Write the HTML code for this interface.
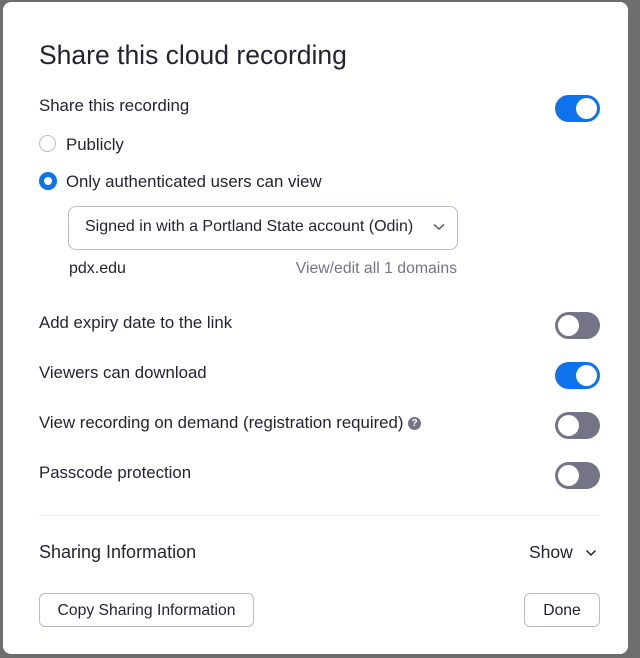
<!DOCTYPE html>
<html><head><style>
body{margin:0;width:640px;height:658px;background:#6e6e6e;font-family:"Liberation Sans",sans-serif;color:#232333;position:relative;overflow:hidden}
.m{position:absolute;left:3px;top:2px;width:625px;height:652px;background:#fff;border-radius:8px}
.a{position:absolute;white-space:nowrap}
.t{font-size:16.8px}
.tg{position:absolute;width:45px;height:27px;border-radius:14px;background:#747487}
.tg::after{content:"";position:absolute;top:3px;left:3px;width:21px;height:21px;border-radius:50%;background:#fff}
.tg.on{background:#0e72ed}
.tg.on::after{left:21px}
.btn{position:absolute;border:1px solid #babacc;border-radius:6px;height:34px;line-height:34px;text-align:center;font-size:15.7px;box-sizing:border-box}
</style></head><body>
<div class="m">
<div class="a" style="left:36px;top:38px;font-size:26.5px">Share this cloud recording</div>
<div class="a t" style="left:36px;top:94px">Share this recording</div>
<div class="tg on" style="left:552px;top:93px"></div>
<div style="position:absolute;left:36px;top:133px;width:15px;height:15px;border:1px solid #babacc;border-radius:50%"></div>
<div class="a t" style="left:63px;top:133px">Publicly</div>
<div style="position:absolute;left:36px;top:170px;width:8px;height:8px;border:5px solid #0e72ed;border-radius:50%"></div>
<div class="a t" style="left:63px;top:170px">Only authenticated users can view</div>
<div style="position:absolute;left:65px;top:204px;width:388px;height:42px;border:1px solid #babacc;border-radius:8px"></div>
<div class="a" style="left:82px;top:216px;font-size:16px">Signed in with a Portland State account (Odin)</div>
<div class="a" style="left:66px;top:258px;font-size:16px">pdx.edu</div>
<div class="a" style="right:171px;top:258px;font-size:15.8px;color:#747487">View/edit all 1 domains</div>
<svg style="position:absolute;left:430px;top:221px" width="12" height="8"><path d="M1 1.5L6 6L11 1.5" stroke="#555" stroke-width="1.5" fill="none"/></svg>
<div class="a t" style="left:36px;top:311px">Add expiry date to the link</div>
<div class="tg" style="left:552px;top:310px"></div>
<div class="a t" style="left:36px;top:361px">Viewers can download</div>
<div class="tg on" style="left:552px;top:360px"></div>
<div class="a t" style="left:36px;top:411px">View recording on demand (registration required)</div>
<div style="position:absolute;left:405px;top:415px;width:13px;height:13px;border-radius:50%;background:#747487;color:#fff;font-size:10px;font-weight:bold;text-align:center;line-height:13px">?</div>
<div class="tg" style="left:552px;top:410px"></div>
<div class="a t" style="left:36px;top:461px">Passcode protection</div>
<div class="tg" style="left:552px;top:460px"></div>
<div style="position:absolute;left:36px;top:513px;width:561px;height:1px;background:#ededf4"></div>
<div class="a" style="left:36px;top:540px;font-size:18px">Sharing Information</div>
<div class="a" style="left:526px;top:540px;font-size:17.5px">Show</div>
<svg style="position:absolute;left:582px;top:547px" width="12" height="8"><path d="M1.5 1.5L6 6L10.5 1.5" stroke="#232333" stroke-width="1.5" fill="none"/></svg>
<div class="btn" style="left:36px;top:591px;width:215px">Copy Sharing Information</div>
<div class="btn" style="left:521px;top:591px;width:76px">Done</div>
</div>
</body></html>
